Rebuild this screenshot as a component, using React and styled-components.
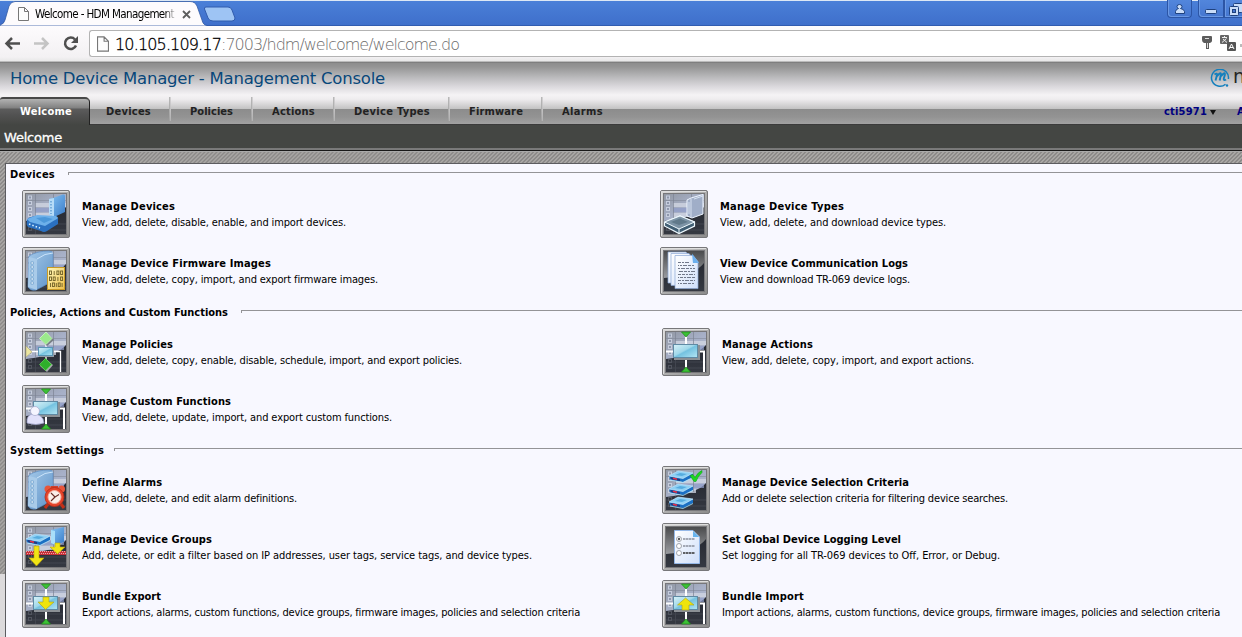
import React, { useLayoutEffect, useRef, useState } from "react";
import styled, { createGlobalStyle, css } from "styled-components";

const GlobalStyle = createGlobalStyle`
  * { box-sizing: border-box; }
  html, body { margin: 0; height: 100%; overflow: hidden; }
  body {
    font-family: "DejaVu Sans Condensed", "DejaVu Sans", "Liberation Sans", sans-serif;
    font-stretch: condensed;
    font-size: 11px;
    color: #000;
    background: #dcdadc;
  }
`;

/* A single line of text whose tracking is tuned so that it spans a given width. */
const Line = styled.span`
  display: inline-block;
  white-space: pre;
`;

function Fit({ w, children }) {
  const ref = useRef(null);
  const [spacing, setSpacing] = useState(0);
  useLayoutEffect(() => {
    const natural = ref.current.getBoundingClientRect().width;
    setSpacing((w - natural) / children.length);
  }, [w, children]);
  return <Line ref={ref} style={{ letterSpacing: `${spacing}px` }}>{children}</Line>;
}

const Page = styled.div`
  width: 1242px;
  height: 637px;
  display: flex;
  flex-direction: column;
  overflow: hidden;
`;

/* ---------- browser chrome ---------- */

const TabStrip = styled.div`
  height: 26px;
  flex: none;
  display: flex;
  background: linear-gradient(#dce8f5 0, #dce8f5 1px, #4a80d8 1px, #4578d2 12px, #3f6fcb 25px, #315bb0 25px);
`;

const BrowserTab = styled.div`
  position: relative;
  width: 204px;
  height: 26px;
  svg.shape { position: absolute; left: 0; top: 0; }
`;

const BrowserTabBody = styled.div`
  position: relative;
  display: flex;
  align-items: center;
  height: 25px;
  padding: 3px 0 0 18px;
  font-size: 11.5px;
  line-height: 14px;
`;

const TabTitle = styled.div`
  width: 141px;
  margin-left: 6px;
  overflow: hidden;
  white-space: nowrap;
  mask-image: linear-gradient(90deg, #000 130px, transparent 141px);
`;

const CloseIcon = styled.svg`
  margin-left: 6px;
`;

const WindowButtons = styled.div`
  margin-left: auto;
  width: 75px;
  height: 19px;
  display: flex;
`;

const WindowButton = styled.div`
  width: ${(p) => p.$w}px;
  height: 18px;
  margin-right: ${(p) => p.$gap || 0}px;
  border: 1px solid #2c55a5;
  border-top: 0;
  border-radius: ${(p) => p.$radius};
  background: linear-gradient(#5286dc, #4576d0);
  box-shadow: inset 1px -1px 0 #6b99e4;
  flex: none;
  svg { display: block; }
`;

const Toolbar = styled.div`
  height: 35px;
  flex: none;
  display: flex;
  align-items: flex-start;
  padding-top: 4px;
  background: linear-gradient(#fdfbfd, #f3f1f3 31px, #e8e8e8);
`;

const NavIcons = styled.div`
  width: 89px;
  height: 27px;
`;

const AddressBar = styled.div`
  flex: 1;
  height: 27px;
  display: flex;
  align-items: center;
  padding-left: 7px;
  background: #fff;
  border: 1px solid #b3b3b3;
  border-right: 0;
  border-radius: 3px 0 0 3px;
`;

const Url = styled.div`
  margin: 2px 0 0 6px;
  font: 200 16px/22px "DejaVu Sans", sans-serif;
  color: #6c6c6c;
  display: flex;
  b {
    font-weight: inherit;
    color: #000;
    -webkit-text-stroke: 0.3px #000;
  }
`;

const AddressIcons = styled.div`
  margin-left: auto;
  width: 42px;
  height: 25px;
`;

/* ---------- application header ---------- */

const Header = styled.header`
  height: 64px;
  flex: none;
  display: flex;
  flex-direction: column;
  background: linear-gradient(
    #bbb 0, #bbb 1px, #707070 1px, #8d8d8d 2px, #959595 6px, #b9b9bb 16px, #dcdade 26px,
    #f5f3f5 34px, #efedef 38px, #c2c2c2 48px, #8c8c8c 48px, #939393 56px, #a2a2a2 63px, #555 63px, #222 64px
  );
`;

const Brand = styled.div`
  height: 35px;
  flex: none;
  display: flex;
  align-items: flex-start;
  padding: 8px 0 0 10px;
  font: 16.5px/20px "DejaVu Sans", sans-serif;
  color: #08477a;
`;

const Logo = styled.div`
  margin-left: auto;
  width: 32px;
  height: 24px;
  display: flex;
  gap: 3px;
  overflow: hidden;
  color: #262626;
  font: 19px/14px "DejaVu Sans", sans-serif;
  svg { flex: none; margin-top: -2px; }
`;

const Nav = styled.nav`
  height: 29px;
  flex: none;
  display: flex;
  padding-top: 1px;
  font-weight: bold;
  color: #222;
`;

const NavTab = styled.div`
  width: ${(p) => p.$w}px;
  height: 28px;
  flex: none;
  padding: 8px 0 0 ${(p) => p.$pad}px;
  line-height: 14px;
  background:
    linear-gradient(#d4d2d4, #b2b2b2) no-repeat 100% 0 / ${(p) => (p.$last ? 0 : 1)}px 24px,
    linear-gradient(#b8b8b8, #a2a2a2) no-repeat calc(100% - 1px) 0 / ${(p) => (p.$last ? 0 : 1)}px 24px;
  ${(p) =>
    p.$active &&
    css`
      color: #fff;
      border: 1px solid #303030;
      border-width: 2px 1px 0 0;
      border-color: #484848 #222 #222;
      border-radius: 3px 5px 0 0;
      padding-top: 6px;
      background: linear-gradient(#b2b2b2 0, #808080 9px, #5c5c5c 10px, #525252 16px, #444643 26px);
    `}
`;

const UserMenu = styled.div`
  margin-left: auto;
  width: 78px;
  padding-top: 8px;
  line-height: 14px;
  display: flex;
  overflow: hidden;
  color: #000080;
  svg { margin: 4px 21px 0 3px; flex: none; }
`;

const SubHeader = styled.div`
  height: 27px;
  flex: none;
  padding: 4px 0 0 4px;
  background: linear-gradient(#444643 23px, #777 23px, #7c7c7c 25px, #181818 25px, #181818 26px, #aaa 26px);
  color: #fff;
  font: 13px/17px "DejaVu Sans", sans-serif;
  -webkit-text-stroke: 0.3px #fff;
`;

/* ---------- content ---------- */

const Backdrop = styled.div`
  flex: 1;
  padding: 11px 0 0 5px;
  background:
    linear-gradient(#dcdadc, #dcdadc) no-repeat 0 422px / 100% 100%,
    repeating-linear-gradient(135deg, #8c8a89 0, #8c8a89 1.2px, #a8a6a4 1.4px, #a8a6a4 2.6px, #8c8a89 2.83px);
`;

const Panel = styled.main`
  height: 100%;
  padding-top: 2px;
  border: 1px solid #5c5c60;
  border-width: 1px 0 0 1px;
  background: #f8f8ff;
`;

const Section = styled.section`
  display: flex;
  flex-direction: column;
`;

const SectionHead = styled.h2`
  height: 24px;
  margin: 0;
  padding: 1px 0 0 4px;
  display: flex;
  font-size: 11px;
  line-height: 16px;
  &::after {
    content: "";
    flex: 1;
    height: 2px;
    margin: 5px 0 0 ${(p) => p.$gap}px;
    border-top: 1px solid #949497;
    border-left: 1px solid #949497;
  }
`;

const Grid = styled.div`
  display: grid;
  grid-template-columns: ${(p) => p.$first}px 1fr;
  grid-auto-rows: 57px;
  padding-left: 16px;
`;

const Entry = styled.div`
  display: flex;
  gap: 12px;
  white-space: nowrap;
  > svg { flex: none; }
`;

const EntryText = styled.div`
  padding-top: 9px;
  line-height: 16px;
`;

const EntryTitle = styled.div`
  height: 16px;
  font-weight: bold;
`;

const EntryNote = styled.div`
  height: 16px;
  font-size: 11px;
`;

/* ---------- drawings ---------- */

const HiddenDefs = styled.svg`
  display: block;
`;

const Defs = () => (
  <HiddenDefs width="0" height="0">
    <defs>
      <linearGradient id="frame" x1="0" y1="0" x2="1" y2="1">
        <stop offset="0" stopColor="#dcdcdc" />
        <stop offset=".45" stopColor="#b2b2b2" />
        <stop offset="1" stopColor="#8b8b8b" />
      </linearGradient>
      <linearGradient id="night" x1="0" y1="0" x2="0" y2="1">
        <stop offset="0" stopColor="#20232b" />
        <stop offset="1" stopColor="#353942" />
      </linearGradient>
      <linearGradient id="glass" x1="0" y1="0" x2="1" y2="1">
        <stop offset="0" stopColor="#9197a2" />
        <stop offset=".5" stopColor="#a6afc6" />
        <stop offset="1" stopColor="#b4bcd6" />
      </linearGradient>
      <linearGradient id="gloss" x1="0" y1="0" x2="0" y2="1">
        <stop offset="0" stopColor="#4a4b4d" />
        <stop offset="1" stopColor="#9a9ca0" />
      </linearGradient>
      <linearGradient id="screen" x1="0" y1="0" x2="1" y2="1">
        <stop offset="0" stopColor="#d8f2f8" />
        <stop offset=".45" stopColor="#a0d8ea" />
        <stop offset=".52" stopColor="#74c2e0" />
        <stop offset="1" stopColor="#b4e6f4" />
      </linearGradient>
      <linearGradient id="blue" x1="0" y1="0" x2="1" y2="1">
        <stop offset="0" stopColor="#86c4f4" />
        <stop offset="1" stopColor="#3a7cc8" />
      </linearGradient>
      <linearGradient id="paleBlue" x1="0" y1="0" x2="1" y2="1">
        <stop offset="0" stopColor="#a4c8e8" />
        <stop offset="1" stopColor="#5d92c8" />
      </linearGradient>
      <linearGradient id="gold" x1="0" y1="0" x2="1" y2="1">
        <stop offset="0" stopColor="#fff8bc" />
        <stop offset="1" stopColor="#ecc04c" />
      </linearGradient>
      <linearGradient id="paper" x1="0" y1="0" x2="1" y2="1">
        <stop offset="0" stopColor="#fff" />
        <stop offset="1" stopColor="#cfdffa" />
      </linearGradient>
    </defs>
  </HiddenDefs>
);

function Tile({ plain, children }) {
  return (
    <svg width="48" height="48" viewBox="0 0 48 48">
      <rect x=".5" y=".5" width="47" height="47" rx="1.5" fill="url(#frame)" stroke="#77777a" />
      <path d="M1.500 46V1.500H46" fill="none" stroke="#dedede" />
      <rect x="3.500" y="3.500" width="41" height="41" fill="url(#night)" stroke="#77777a" />
      {plain ? (
        <path d="M4 4H44V16Q34 29 4 31Z" fill="url(#gloss)" />
      ) : (
        <>
          <path d="M4 4H44V17Q36 27 4 31Z" fill="url(#glass)" />
          <path d="M13 15H44M13 25H34" stroke="#d3d8e4" strokeWidth="4" opacity=".75" />
          <path d="M13 20H42" stroke="#8f9cc8" strokeWidth="4" opacity=".7" />
          <path d="M13.500 4V29M31.500 4V26" stroke="#7d8494" opacity=".7" />
          <path d="M4 10.500H44" stroke="#7d8494" opacity=".5" />
          <path d="M13.500 30V44M4 34H44M4 40H44" stroke="#565a65" opacity=".45" />
          {[6, 11.5, 17.5, 23.5].map((y) => (
            <rect key={y} x="6.5" y={y} width="3" height="3" fill="#8f98ac" stroke="#c6cddd" />
          ))}
          {[31.5, 37.5].map((y) => (
            <rect key={y} x="6.5" y={y} width="3" height="3" fill="none" stroke="#50545e" />
          ))}
        </>
      )}
      {children}
    </svg>
  );
}

const Tower = () => (
  <>
    <path d="M7 9Q15 4 27 4Q31 4 31 7V34L14 43Q7 44 6 39Z" fill="url(#paleBlue)" stroke="#5e90c8" strokeWidth=".7" />
    <path d="M7 10L15 12V43L6 40Z" fill="#a9cbe9" />
    <path d="M15 12Q23 6 31 6" fill="none" stroke="#cbe4fa" />
    {[15, 19, 23, 27, 31, 35].map((y) => (
      <rect key={y} x="9" y={y} width="2.5" height="2" fill="#f0faff" stroke="#437fb9" strokeWidth=".5" />
    ))}
  </>
);

const Flow = () => (
  <>
    <path d="M24 4V44M4 23.500H11M37 23.500H42V44" fill="none" stroke="#fff" strokeWidth="2" />
    <path d="M19.500 4H28.500L24 9ZM24 39L28.500 44H19.500Z" fill="#3cc036" stroke="#1b8a16" strokeWidth=".7" />
    <rect x="12" y="17" width="26" height="15" fill="#8b9095" />
    <rect x="11.500" y="16.500" width="24" height="13" fill="url(#screen)" stroke="#5f8aa4" />
  </>
);

const Disk = ({ x, y }) => (
  <g transform={`translate(${x} ${y})`}>
    <path d="M0 6L9 1L24 3V7L14 12L1 9.500Z" fill="#1a70c4" />
    <path d="M0 6L9 1L24 3L14 8.500Z" fill="#8fd0f4" stroke="#d8f4ff" strokeWidth=".6" />
    <path d="M6 5L11 3L18 4L13 6Z" fill="#55acdf" />
    <path d="M1.500 7L11 9V11L2 9.300Z" fill="#243c80" />
    <path d="M4 8.200L8 9.200" stroke="#e8324a" strokeWidth="1.400" />
    <path d="M1 10L14 12.500L24 7.500" fill="none" stroke="#a8e2fb" strokeWidth=".8" />
  </g>
);

const digits = ["0100", "0010", "10101"];

const icons = {
  devices: (
    <Tile>
      <path d="M31 8L41 4.500Q43 4 43 6V22L32 27L27 24V9Z" fill="url(#blue)" />
      <path d="M27 9L32 8V27L27 24.500Z" fill="#b6dcf8" />
      <path d="M29 11V24" stroke="#3c83c5" strokeDasharray="1.500 1.500" />
      <path d="M5 30Q6 27 13 26L33 26Q37 27 36 30V34L25 41Q22 43 19 41L6 37Q4 35 5 30Z" fill="#2a70c0" />
      <path d="M5 29L15 25L34 26Q38 28 33 30L23 36L8 32Z" fill="#6db0ea" />
      <path d="M14 28L23 27L31 29L22 33Z" fill="#4c98da" />
      <path d="M7 34L18 38" stroke="#daf1ff" strokeWidth="1.600" strokeDasharray="1.500 2" />
    </Tile>
  ),
  types: (
    <Tile>
      <path d="M27 10L31 8L43 4.500V24L32 28L27 26Z" fill="#a0aec8" stroke="#eef5ff" />
      <path d="M31 9V27M29 12V24M34 9L43 6" stroke="#dce6f5" strokeWidth=".9" />
      <path d="M4.500 32L20 26L34.500 32V36L19 43.500L4.500 36Z" fill="#405e73" stroke="#effaff" strokeWidth="1.200" />
      <path d="M4.500 32L20 26L34.500 32L19 39Z" fill="#7d94a6" stroke="#effaff" />
      <path d="M11 32L20 28.500L28 32L19 35Z" fill="#60798a" />
      <path d="M19 39V43" stroke="#effaff" />
    </Tile>
  ),
  firmware: (
    <Tile>
      <Tower />
      <rect x="25.500" y="20.500" width="17" height="22" fill="url(#gold)" stroke="#c99b27" />
      {digits.map((row, i) => (
        <g key={row} fill="none" stroke="#6b5c24" strokeWidth=".9">
          {row.split("").map((d, j) => {
            const x = 27.5 + j * (i === 2 ? 2.9 : 3.7);
            const y = 24 + i * 6;
            return d === "1" ? (
              <path key={j} d={`M${x + 1} ${y}V${y + 4}`} />
            ) : (
              <rect key={j} x={x} y={y} width="2" height="3.500" />
            );
          })}
        </g>
      ))}
    </Tile>
  ),
  logs: (
    <Tile plain>
      {[0, 3, 7].map((d) => (
        <path key={d} d={`M${8 + d} ${5 + d / 2}H${26 + d}L${31 + d} ${11 + d / 2}V${36 + d * 0.8}H${8 + d}Z`} fill="url(#paper)" stroke="#8aa6d4" strokeWidth=".7" />
      ))}
      <path d="M32 6.500L39 16H33Z" fill="#6cb0ee" />
      {[15.5, 18.5, 21.5, 24.5, 27.5, 30.5, 33.5, 36.5].map((y, i) => (
        <path key={y} d={`M18 ${y}H${i === 0 ? 29 : 35}`} stroke="#70788a" strokeDasharray="3 1 2 1 4 1" strokeDashoffset={i * 2} />
      ))}
    </Tile>
  ),
  policies: (
    <Tile>
      <path d="M24 14V36M4 23.500H38.500V44" fill="none" stroke="#fff" strokeWidth="1.300" />
      <path d="M25 5L32 12L25 18L19 12Z" fill="#777e85" />
      <path d="M24 4L30 10.500L24 16.500L17.500 10.500Z" fill="#9bea8c" stroke="#d7ffce" strokeWidth=".7" />
      <path d="M24 31L31 37L25 44L18 38Z" fill="#a5a9aa" />
      <path d="M23.500 30.500L29.500 36.500L23.500 42.500L17.500 36.500Z" fill="#2fae2b" stroke="#61d857" strokeWidth=".7" />
      <path d="M4 18L10 24L4 29Z" fill="#ece6a0" stroke="#aaa678" strokeWidth=".6" />
      <rect x="17" y="20" width="15" height="9" fill="#929da6" />
      <rect x="16.500" y="19.500" width="14" height="8" fill="url(#screen)" stroke="#5a95b4" />
    </Tile>
  ),
  actions: <Tile><Flow /></Tile>,
  custom: (
    <Tile>
      <Flow />
      <path d="M5 38Q4 30 11 29Q18 29 21 34L22 38Q14 41 5 38Z" fill="#e1e1fa" stroke="#9fa2cb" strokeWidth=".7" />
      <circle cx="13" cy="26" r="4.500" fill="#f5f5ff" stroke="#a3a6cb" strokeWidth=".7" />
    </Tile>
  ),
  alarms: (
    <Tile>
      <Tower />
      <path d="M26 38L23 42M39 38L42 42" stroke="#c12f18" strokeWidth="3" />
      <circle cx="26" cy="23" r="3.500" fill="#e8553a" />
      <circle cx="39.500" cy="23" r="3.500" fill="#e8553a" />
      <path d="M29 20H36V24H29Z" fill="#d2402a" />
      <circle cx="32.500" cy="31" r="9.500" fill="#e5442a" stroke="#b82c18" strokeWidth=".8" />
      <circle cx="32.500" cy="31" r="6.500" fill="#faf0ea" stroke="#f5b3a2" />
      <path d="M29 27L33 31L37 28.500M33 31L29 35" fill="none" stroke="#6a2c25" strokeWidth="1.100" />
    </Tile>
  ),
  groups: (
    <Tile>
      <Disk x={4} y={10} />
      <path d="M29 7L42 4V19L33 22L29 20Z" fill="url(#blue)" />
      <path d="M29 7L33 8V22L29 20Z" fill="#a9def9" />
      <path d="M4 30H44" stroke="#c8303a" strokeWidth="4" />
      <path d="M4 28.500H44M5 30.500H44" stroke="#e8a8a8" strokeDasharray="1 1" />
      <path d="M12 23H17V35H22L14.500 43L7 35H12ZM33 20H38V24H43L35.500 31L28 24H33Z" fill="#f0e414" stroke="#b99f08" strokeWidth=".6" />
    </Tile>
  ),
  criteria: (
    <Tile>
      <Disk x={7} y={4} />
      <Disk x={7} y={17} />
      <Disk x={7} y={30} />
      <path d="M28 9.500L31 8.500L33 11.500Q36 6 40 4.500L40 6.500Q36 10 34 15.500H32Z" fill="#1ed820" stroke="#079a12" strokeWidth=".5" />
    </Tile>
  ),
  logging: (
    <Tile plain>
      <path d="M12.500 7.500H31L37.500 14V40.500H12.500Z" fill="url(#paper)" stroke="#94b8e8" />
      <path d="M31 8L37 14H31Z" fill="#65b3ee" />
      {[16, 23, 30].map((y, i) => (
        <g key={y}>
          <circle cx="17" cy={y} r="2.500" fill="#fff" stroke="#8a909a" strokeWidth=".8" />
          {i === 0 && <circle cx="17" cy={y} r="1.200" fill="#555" />}
          <path d={`M21 ${y}H33`} stroke={i === 2 ? "#333" : "#8a909c"} strokeWidth="1.300" strokeDasharray="2 .5 3 .5" />
        </g>
      ))}
    </Tile>
  ),
  export: (
    <Tile>
      <Flow />
      <path d="M21 17H27V22H32L23.500 29.500L16 22H21Z" fill="#efe40c" stroke="#aaa21f" strokeWidth=".6" />
    </Tile>
  ),
  import: (
    <Tile>
      <Flow />
      <path d="M23.500 18L32 25H27V30H20V25H15.500Z" fill="#efe40c" stroke="#aaa21f" strokeWidth=".6" />
    </Tile>
  ),
};

const PageIcon = ({ w = 11, h = 14 }) => (
  <svg width={w} height={h} viewBox="0 0 11 14">
    <path d="M1 .5H6.500L10.500 4.500V13.500H.5V.5ZM6.500 .5V4.500H10.500" fill="#fdfdfd" stroke="#777" />
  </svg>
);

/* ---------- data ---------- */

const navTabs = [
  ["Welcome", 90, 20, 52],
  ["Devices", 81, 16, 45],
  ["Policies", 82, 19, 43],
  ["Actions", 82, 19, 43],
  ["Device Types", 115, 19, 76],
  ["Firmware", 93, 19, 54],
  ["Alarms", 82, 19, 41],
];

const sections = [
  {
    title: "Devices", w: 45, gap: 13, first: 638,
    items: [
      ["devices", "Manage Devices", 93, "View, add, delete, disable, enable, and import devices.", 264],
      ["types", "Manage Device Types", 124, "View, add, delete, and download device types.", 226],
      ["firmware", "Manage Device Firmware Images", 189, "View, add, delete, copy, import, and export firmware images.", 296],
      ["logs", "View Device Communication Logs", 188, "View and download TR-069 device logs.", 190],
    ],
  },
  {
    title: "Policies, Actions and Custom Functions", w: 218, gap: 13, first: 640,
    items: [
      ["policies", "Manage Policies", 91, "View, add, delete, copy, enable, disable, schedule, import, and export policies.", 380],
      ["actions", "Manage Actions", 91, "View, add, delete, copy, import, and export actions.", 252],
      ["custom", "Manage Custom Functions", 149, "View, add, delete, update, import, and export custom functions.", 310],
    ],
  },
  {
    title: "System Settings", w: 94, gap: 10, first: 640,
    items: [
      ["alarms", "Define Alarms", 80, "View, add, delete, and edit alarm definitions.", 215],
      ["criteria", "Manage Device Selection Criteria", 187, "Add or delete selection criteria for filtering device searches.", 286],
      ["groups", "Manage Device Groups", 130, "Add, delete, or edit a filter based on IP addresses, user tags, service tags, and device types.", 450],
      ["logging", "Set Global Device Logging Level", 179, "Set logging for all TR-069 devices to Off, Error, or Debug.", 278],
      ["export", "Bundle Export", 79, "Export actions, alarms, custom functions, device groups, firmware images, policies and selection criteria", 498],
      ["import", "Bundle Import", 82, "Import actions, alarms, custom functions, device groups, firmware images, policies and selection criteria", 498],
    ],
  },
];

export default function App() {
  return (
    <Page>
      <GlobalStyle />
      <Defs />
      <TabStrip>
        <BrowserTab>
          <svg className="shape" width="240" height="26">
            <path d="M0 26V25Q4 24 5 20L9 6Q11 1.500 15 1.500H190Q195 1.500 197 6L202 20Q203 25 207 25.500V26Z" fill="#fdfbfd" stroke="#3159a3" strokeWidth=".8" />
            <path d="M206 7H228Q231 7 232 10L235 18Q235 21 232 21H213Q209 21 208 18L204.500 9Q204 7 206 7Z" fill="#9ec4f4" stroke="#315cae" />
          </svg>
          <BrowserTabBody>
            <PageIcon />
            <TabTitle><Fit w={139}>Welcome - HDM Management</Fit></TabTitle>
            <CloseIcon width="9" height="9"><path d="M1 1L8 8M8 1L1 8" stroke="#5d5d5d" strokeWidth="1.800" /></CloseIcon>
          </BrowserTabBody>
        </BrowserTab>
        <WindowButtons>
          <WindowButton $w={25} $gap={6} $radius="0 0 4px 4px">
            <svg width="23" height="17">
              <path d="M7.500 13.500V11.500Q8 9 10.500 8.500Q9 8 9 6.500Q9 4.500 11.500 4.500Q14 4.500 14 6.500Q14 8 12.500 8.500Q16 9 16.500 11.500V13.500Z" fill="#c9dcf8" stroke="#1f427f" />
            </svg>
          </WindowButton>
          <WindowButton $w={26} $radius="0 0 0 4px">
            <svg width="24" height="17"><rect x="6.500" y="9.500" width="11" height="4" rx="1" fill="#c9dcf8" stroke="#1f427f" /></svg>
          </WindowButton>
          <WindowButton $w={28} $radius="0">
            <svg width="26" height="17" fill="#c9dcf8" stroke="#1f427f">
              <rect x="8.500" y="3.500" width="9" height="9" rx="1" />
              <rect x="4.500" y="6.500" width="9" height="9" rx="1" />
              <rect x="7.500" y="9.500" width="3" height="3" fill="#4576d0" />
            </svg>
          </WindowButton>
        </WindowButtons>
      </TabStrip>

      <Toolbar>
        <NavIcons>
          <svg width="89" height="27" fill="none" strokeWidth="2.500">
            <path d="M20 13.500H7M12 8L6.500 13.500L12 19" stroke="#4f4f4f" />
            <path d="M34 13.500H47M42 8L47.500 13.500L42 19" stroke="#c4c4c4" />
            <path d="M75 9.500A5.700 5.700 0 1 0 76 15.500" stroke="#4f4f4f" />
            <path d="M78 6V13H71Z" fill="#4f4f4f" />
          </svg>
        </NavIcons>
        <AddressBar>
          <PageIcon w={12} h={16} />
          <Url><b><Fit w={106}>10.105.109.17</Fit></b><Fit w={238}>:7003/hdm/welcome/welcome.do</Fit></Url>
          <AddressIcons>
            <svg width="42" height="25">
              <path d="M3 5H11Q12 5 12 6V10Q12 11 10 12H9V18H6V12H4Q2 11 2 9V6Q2 5 3 5Z" fill="#5c5c5c" />
              <path d="M5 7.500H9M7.500 12V17" stroke="#ddd" />
              <rect x="20" y="4" width="9" height="9" rx="1" fill="#666" />
              <path d="M22 6.500H27M24.500 5V6.500M23 8L27 11.500M26.500 7.500L22 11.500" stroke="#eee" fill="none" />
              <rect x="27" y="11" width="9" height="9" rx="1" fill="#555" />
              <path d="M29 18L31.500 13L34 18M30 16.500H33" stroke="#fff" fill="none" />
              <path d="M41 13V16" stroke="#777" />
            </svg>
          </AddressIcons>
        </AddressBar>
      </Toolbar>

      <Header>
        <Brand>
          <Fit w={375}>Home Device Manager - Management Console</Fit>
          <Logo>
            <svg width="20" height="22" viewBox="0 0 20 22" fill="none" stroke="#137fbd">
              <path d="M15.500 17.200A8.500 8.500 0 1 1 18.400 12" strokeWidth="1.500" />
              <path d="M4.500 7.500Q7.500 5.500 7 8L5.500 13.500M7 9Q11.500 4 10.800 8L9.700 13.500M11 9Q15.500 4 14.800 8L13.700 12Q14 14 16 12.500" strokeWidth="1.900" />
              <circle cx="17" cy="18.500" r="1.200" fill="#137fbd" stroke="none" />
            </svg>
            n
          </Logo>
        </Brand>
        <Nav>
          {navTabs.map(([label, w, pad, tw], i) => (
            <NavTab key={label} $w={w} $pad={pad} $active={i === 0} $last={i === navTabs.length - 1}>
              <Fit w={tw}>{label}</Fit>
            </NavTab>
          ))}
          <UserMenu>
            <Fit w={43}>cti5971</Fit>
            <svg width="6" height="6"><path d="M0 1H6L3 6Z" fill="#111" /></svg>
            A
          </UserMenu>
        </Nav>
      </Header>
      <SubHeader><Fit w={58}>Welcome</Fit></SubHeader>

      <Backdrop>
        <Panel>
          {sections.map((s) => (
            <Section key={s.title}>
              <SectionHead $gap={s.gap}><Fit w={s.w}>{s.title}</Fit></SectionHead>
              <Grid $first={s.first}>
                {s.items.map(([icon, title, tw, note, nw]) => (
                  <Entry key={title}>
                    {icons[icon]}
                    <EntryText>
                      <EntryTitle><Fit w={tw}>{title}</Fit></EntryTitle>
                      <EntryNote><Fit w={nw}>{note}</Fit></EntryNote>
                    </EntryText>
                  </Entry>
                ))}
              </Grid>
            </Section>
          ))}
        </Panel>
      </Backdrop>
    </Page>
  );
}
